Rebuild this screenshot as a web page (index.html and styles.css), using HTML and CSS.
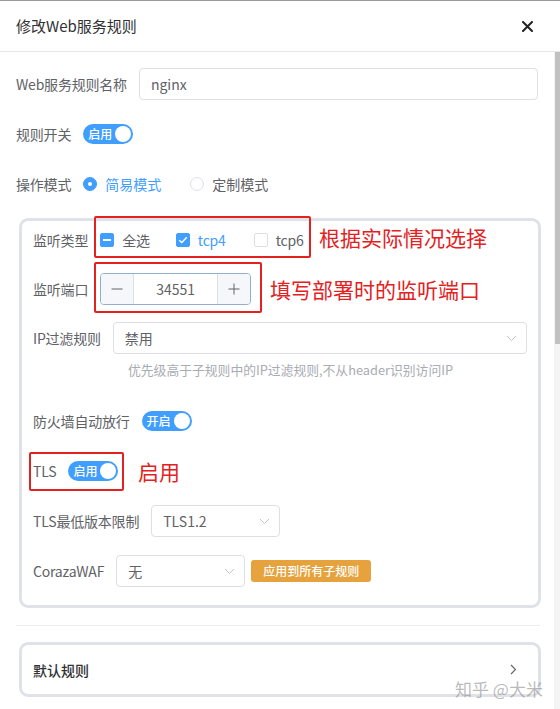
FILE: index.html
```html
<!DOCTYPE html>
<html lang="zh-CN">
<head>
<meta charset="utf-8">
<title>修改Web服务规则</title>
<link rel="stylesheet" href="styles.css">
</head>
<body>
<div class="dialog">
  <div class="header">
    <span class="title">修改Web服务规则</span>
    <span class="close"><svg width="11" height="11" viewBox="0 0 11 11"><path d="M1 1L10 10M10 1L1 10" stroke="#222" stroke-width="2" stroke-linecap="round"/></svg></span>
  </div>
  <div class="body">
    <div class="content">
      <div class="row main-row">
        <span class="label">Web服务规则名称</span>
        <div class="input grow">nginx</div>
      </div>
      <div class="row main-row">
        <span class="label">规则开关</span>
        <span class="switch"><span class="switch-text">启用</span><span class="knob"></span></span>
      </div>
      <div class="row main-row">
        <span class="label">操作模式</span>
        <span class="radio checked"><span class="dot"></span><span class="radio-text">简易模式</span></span>
        <span class="radio"><span class="dot"></span><span class="radio-text">定制模式</span></span>
      </div>

      <div class="card">
        <div class="row">
          <span class="label">监听类型</span>
          <span class="check"><span class="box indeterminate"><span class="bar"></span></span><span class="check-text">全选</span></span>
          <span class="check on"><span class="box checked"><svg width="10" height="8" viewBox="0 0 10 8"><path d="M1.2 4.2L3.8 6.6L8.8 1.2" fill="none" stroke="#fff" stroke-width="1.4"/></svg></span><span class="check-text">tcp4</span></span>
          <span class="check"><span class="box"></span><span class="check-text">tcp6</span></span>
        </div>
        <div class="row gap17">
          <span class="label">监听端口</span>
          <div class="number">
            <span class="num-btn minus"><svg width="12" height="12" viewBox="0 0 12 12"><path d="M0.5 6H11.5" stroke="#606266" stroke-width="1"/></svg></span>
            <span class="num-value">34551</span>
            <span class="num-btn plus"><svg width="12" height="12" viewBox="0 0 12 12"><path d="M0.5 6H11.5M6 0.5V11.5" stroke="#606266" stroke-width="1"/></svg></span>
          </div>
        </div>
        <div class="row gap17">
          <span class="label">IP过滤规则</span>
          <div class="select grow"><span>禁用</span><svg class="arrow" width="11" height="7" viewBox="0 0 11 7"><path d="M1 1L5.5 5.5L10 1" fill="none" stroke="#c0c4cc" stroke-width="1"/></svg></div>
        </div>
        <div class="help">优先级高于子规则中的IP过滤规则,不从header识别访问IP</div>
        <div class="row gap25">
          <span class="label">防火墙自动放行</span>
          <span class="switch"><span class="switch-text">开启</span><span class="knob"></span></span>
        </div>
        <div class="row gap18">
          <span class="label">TLS</span>
          <span class="switch"><span class="switch-text">启用</span><span class="knob"></span></span>
        </div>
        <div class="row gap18">
          <span class="label">TLS最低版本限制</span>
          <div class="select short"><span>TLS1.2</span><svg class="arrow" width="11" height="7" viewBox="0 0 11 7"><path d="M1 1L5.5 5.5L10 1" fill="none" stroke="#c0c4cc" stroke-width="1"/></svg></div>
        </div>
        <div class="row gap18">
          <span class="label">CorazaWAF</span>
          <div class="select short"><span>无</span><svg class="arrow" width="11" height="7" viewBox="0 0 11 7"><path d="M1 1L5.5 5.5L10 1" fill="none" stroke="#c0c4cc" stroke-width="1"/></svg></div>
          <span class="btn-warning">应用到所有子规则</span>
        </div>

        <div class="mark box1"></div>
        <div class="mark-text t1">根据实际情况选择</div>
        <div class="mark box2"></div>
        <div class="mark-text t2">填写部署时的监听端口</div>
        <div class="mark box3"></div>
        <div class="mark-text t3">启用</div>
      </div>

      <div class="divider"></div>

      <div class="card rule-card">
        <span class="rule-title">默认规则</span>
        <svg width="7" height="11" viewBox="0 0 7 11"><path d="M1 1L5.5 5.5L1 10" fill="none" stroke="#606266" stroke-width="1.1"/></svg>
      </div>
    </div>
    <div class="scrollbar"><div class="thumb"></div></div>
  </div>
  <div class="watermark">知乎 @大米</div>
</div>
</body>
</html>
```

FILE: styles.css
```css
* { box-sizing: border-box; }
html, body { margin: 0; padding: 0; background: #fff; }
body {
  font-family: "Noto Sans CJK SC", "Noto Sans", sans-serif;
  color: #606266;
  font-size: 14px;
}
.dialog {
  position: relative;
  width: 560px;
  height: 709px;
  overflow: hidden;
  border-top: 1px solid #9a9a9a;
  background: #fff;
}
.header {
  height: 51px;
  display: flex;
  align-items: center;
  justify-content: space-between;
  padding: 0 27px 0 16px;
  border-bottom: 1px solid #e4e7ed;
}
.title {
  font-size: 15px;
  color: #303133;
  line-height: 20px;
  margin-top: -1px;
}
.close { display: flex; }
.body {
  display: flex;
  height: 657px;
}
.content {
  flex: 1;
  padding: 16px 13px 0 16px;
  min-width: 0;
}
.scrollbar {
  width: 6px;
  background: #f4f4f4;
  padding-left: 1px;
}
.thumb {
  width: 5px;
  height: 292px;
  background: #c1c1c1;
}
.row {
  display: flex;
  align-items: center;
  height: 32px;
}
.main-row { margin-bottom: 18px; margin-right: 3px; }
.gap17 { margin-top: 17px; }
.gap18 { margin-top: 18px; }
.gap25 { margin-top: 25px; }
.label {
  font-size: 14px;
  color: #606266;
  margin-right: 12px;
  white-space: nowrap;
  line-height: 20px;
  letter-spacing: -0.2px;
}
.grow { flex: 1; }
.input, .select {
  height: 32px;
  border: 1px solid #dcdfe6;
  border-radius: 4px;
  padding: 0 11px;
  display: flex;
  align-items: center;
  color: #606266;
  font-size: 14px;
}
.select { justify-content: space-between; padding-right: 9px; }
.select.short { width: 129px; }
.arrow { flex: none; }

.switch {
  position: relative;
  width: 50px;
  height: 20px;
  border-radius: 10px;
  background: #409eff;
  display: flex;
  align-items: center;
  padding-left: 5px;
}
.switch-text {
  color: #fff;
  font-size: 12px;
  line-height: 16px;
  font-weight: 500;
}
.knob {
  position: absolute;
  right: 2px;
  top: 2px;
  width: 16px;
  height: 16px;
  border-radius: 50%;
  background: #fff;
}

.radio {
  display: flex;
  align-items: center;
  margin-right: 29px;
}
.radio .dot {
  width: 14px;
  height: 14px;
  border-radius: 50%;
  border: 1px solid #dcdfe6;
  background: #fff;
  margin-right: 8px;
  display: flex;
  align-items: center;
  justify-content: center;
}
.radio.checked .dot { background: #409eff; border-color: #409eff; }
.radio.checked .dot::after {
  content: "";
  width: 4px;
  height: 4px;
  border-radius: 50%;
  background: #fff;
}
.radio-text { line-height: 20px; }
.radio.checked .radio-text { color: #409eff; }

.card {
  position: relative;
  margin-left: 3px;
  margin-top: 18px;
  border: 3px solid #dfe2e8;
  border-radius: 9px;
  padding: 3px 11px 18px;
}
.check {
  display: flex;
  align-items: center;
  margin-right: 26px;
}
.box {
  width: 14px;
  height: 14px;
  border: 1px solid #dcdfe6;
  border-radius: 2px;
  background: #fff;
  margin-right: 8px;
  display: flex;
  align-items: center;
  justify-content: center;
}
.box.indeterminate, .box.checked { background: #409eff; border-color: #409eff; }
.box .bar { width: 8px; height: 2px; background: #fff; }
.check-text { line-height: 20px; color: #606266; letter-spacing: -0.2px; }
.check.on .check-text { color: #409eff; }
.check.on { margin-right: 28px; }

.number {
  display: flex;
  width: 151px;
  height: 32px;
  border: 1px solid #92aecb;
  border-radius: 4px;
  overflow: hidden;
}
.num-btn {
  width: 33px;
  background: #f5f7fa;
  display: flex;
  align-items: center;
  justify-content: center;
}
.minus { border-right: 1px solid #dcdfe6; }
.plus { border-left: 1px solid #dcdfe6; }
.num-value {
  flex: 1;
  display: flex;
  align-items: center;
  justify-content: center;
  color: #606266;
}

.help {
  margin-top: 6px;
  padding-left: 95px;
  font-size: 12.8px;
  line-height: 20px;
  color: #a8abb2;
}
.btn-warning {
  margin-left: 6px;
  height: 22px;
  padding: 0 12px;
  background: #e6a23c;
  border-radius: 3px;
  color: #fff;
  font-size: 12px;
  line-height: 22px;
  font-weight: 500;
  white-space: nowrap;
}

.mark {
  position: absolute;
  border: 2.5px solid #e3211e;
  border-radius: 2px;
}
.box1 { left: 72px; top: -5px; width: 217px; height: 42px; }
.box2 { left: 72px; top: 41px; width: 168px; height: 51px; }
.box3 { left: 7px; top: 231px; width: 95px; height: 39px; }
.mark-text {
  position: absolute;
  color: #e3211e;
  font-size: 21px;
  line-height: 28px;
  white-space: nowrap;
}
.t1 { left: 297px; top: 2px; }
.t2 { left: 248px; top: 54px; }
.t3 { left: 116px; top: 236px; }

.divider {
  margin-top: 17px;
  height: 1px;
  background: #ebeef5;
  margin-right: 1px;
}
.rule-card {
  margin-top: 16px;
  height: 55px;
  padding: 0 21px 0 11px;
  display: flex;
  align-items: center;
  justify-content: space-between;
}
.rule-title {
  color: #303133;
  font-size: 14px;
  font-weight: 500;
  line-height: 20px;
}
.watermark {
  position: absolute;
  left: 455px;
  top: 676px;
  font-size: 17px;
  line-height: 24px;
  color: rgba(140, 140, 140, 0.6);
  white-space: nowrap;
}
```
